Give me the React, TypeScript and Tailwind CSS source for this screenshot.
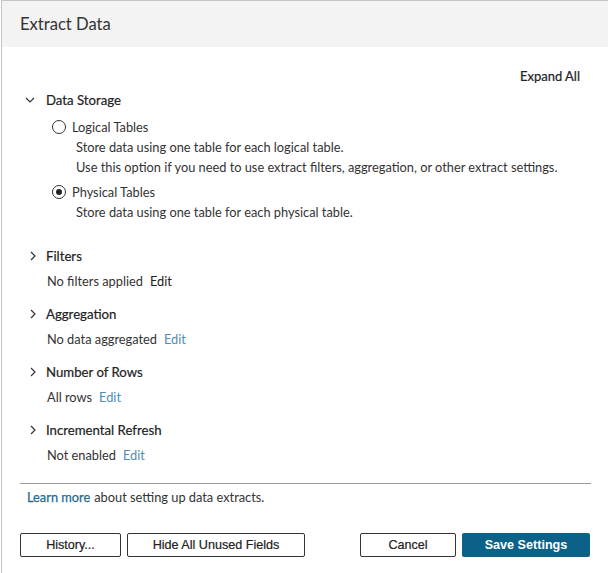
import React from "react";

const Chevron = ({ down }: { down?: boolean }) => (
  <svg width="10" height="10" viewBox="0 0 10 10" className="shrink-0">
    {down ? (
      <path d="M1 3 L5 7 L9 3" fill="none" stroke="#333" strokeWidth="1.2" />
    ) : (
      <path d="M3 1 L7 5 L3 9" fill="none" stroke="#333" strokeWidth="1.2" />
    )}
  </svg>
);

const Radio = ({ checked }: { checked?: boolean }) => (
  <span className="w-[14px] h-[14px] rounded-full border border-[#333] flex items-center justify-center bg-white shrink-0">
    {checked && <span className="w-[6px] h-[6px] rounded-full bg-[#222]" />}
  </span>
);

const Section = ({
  title,
  sub,
  edit,
  editDark,
  mt,
}: {
  title: string;
  sub: string;
  edit: string;
  editDark?: boolean;
  mt: string;
}) => (
  <div className={mt}>
    <div className="flex items-center h-5 pl-[24px]">
      <span className="w-[20px] flex items-center pl-[2px]">
        <Chevron />
      </span>
      <span className="text-[13.2px] text-[#222] [-webkit-text-stroke:0.2px_#222]">{title}</span>
    </div>
    <div className="flex items-center h-5 mt-[5px] pl-[45px]">
      <span className="text-[#333]">{sub}</span>
      <span className={`ml-[7px] ${editDark ? "text-[#222]" : "text-[#4f8db5]"}`}>{edit}</span>
    </div>
  </div>
);

export default function App() {
  return (
    <div
      className="w-[608px] h-[573px] bg-white ml-px border-l border-t border-[#c6c6c6] text-[12.8px] leading-5 overflow-hidden"
      style={{ fontFamily: "Lato, 'Noto Sans', sans-serif" }}
    >
      <div className="h-[46px] bg-[#f3f3f3] flex items-center pl-[18px]">
        <span className="text-[16.6px] text-[#333]">Extract Data</span>
      </div>
      <div className="flex justify-end pr-[29px] mt-[19px] h-5 items-center">
        <span className="text-[13px] text-[#222] [-webkit-text-stroke:0.2px_#222]">Expand All</span>
      </div>
      <div className="mt-[4px]">
        <div className="flex items-center h-5 pl-[23px]">
          <span className="w-[21px] flex items-center">
            <Chevron down />
          </span>
          <span className="text-[13.2px] text-[#222] [-webkit-text-stroke:0.2px_#222]">Data Storage</span>
        </div>
        <div className="flex items-center h-5 mt-[7px] pl-[50px] gap-[6px]">
          <Radio />
          <span className="text-[#333]">Logical Tables</span>
        </div>
        <div className="pl-[74px] text-[#333]">
          <div className="h-5">Store data using one table for each logical table.</div>
          <div className="h-5">Use this option if you need to use extract filters, aggregation, or other extract settings.</div>
        </div>
        <div className="flex items-center h-5 mt-[5px] pl-[50px] gap-[6px]">
          <Radio checked />
          <span className="text-[#333]">Physical Tables</span>
        </div>
        <div className="pl-[74px] text-[#333]">
          <div className="h-5">Store data using one table for each physical table.</div>
        </div>
      </div>
      <Section title="Filters" sub="No filters applied" edit="Edit" editDark mt="mt-[24px]" />
      <Section title="Aggregation" sub="No data aggregated" edit="Edit" mt="mt-[13px]" />
      <Section title="Number of Rows" sub="All rows" edit="Edit" mt="mt-[13px]" />
      <Section title="Incremental Refresh" sub="Not enabled" edit="Edit" mt="mt-[13px]" />
      <div className="mt-[18px] ml-[18px] w-[571px] border-t border-[#9a9a9a]" />
      <div className="mt-[3px] pl-[25px] h-5 flex items-center">
        <span className="text-[#1f6a90] [-webkit-text-stroke:0.25px_#1f6a90]">Learn more</span>
        <span className="ml-[4px] text-[#333]">about setting up data extracts.</span>
      </div>
      <div
        className="mt-[26px] flex items-center pl-[18px] pr-[19px]"
        style={{ fontFamily: "'Liberation Sans', Arial, sans-serif" }}
      >
        <button className="w-[101px] h-[24px] border border-[#333] rounded-[2px] bg-white text-[#222] text-[12.6px] [-webkit-text-stroke:0.2px_#222]">
          History...
        </button>
        <button className="ml-[6px] w-[178px] h-[24px] border border-[#333] rounded-[2px] bg-white text-[#222] text-[12.6px] [-webkit-text-stroke:0.2px_#222]">
          Hide All Unused Fields
        </button>
        <div className="flex-1" />
        <button className="w-[96px] h-[24px] border border-[#333] rounded-[2px] bg-white text-[#222] text-[12.6px] [-webkit-text-stroke:0.2px_#222]">
          Cancel
        </button>
        <button className="ml-[6px] w-[128px] h-[24px] rounded-[2px] bg-[#0c6189] text-white font-bold text-[12.6px]">
          Save Settings
        </button>
      </div>
    </div>
  );
}
